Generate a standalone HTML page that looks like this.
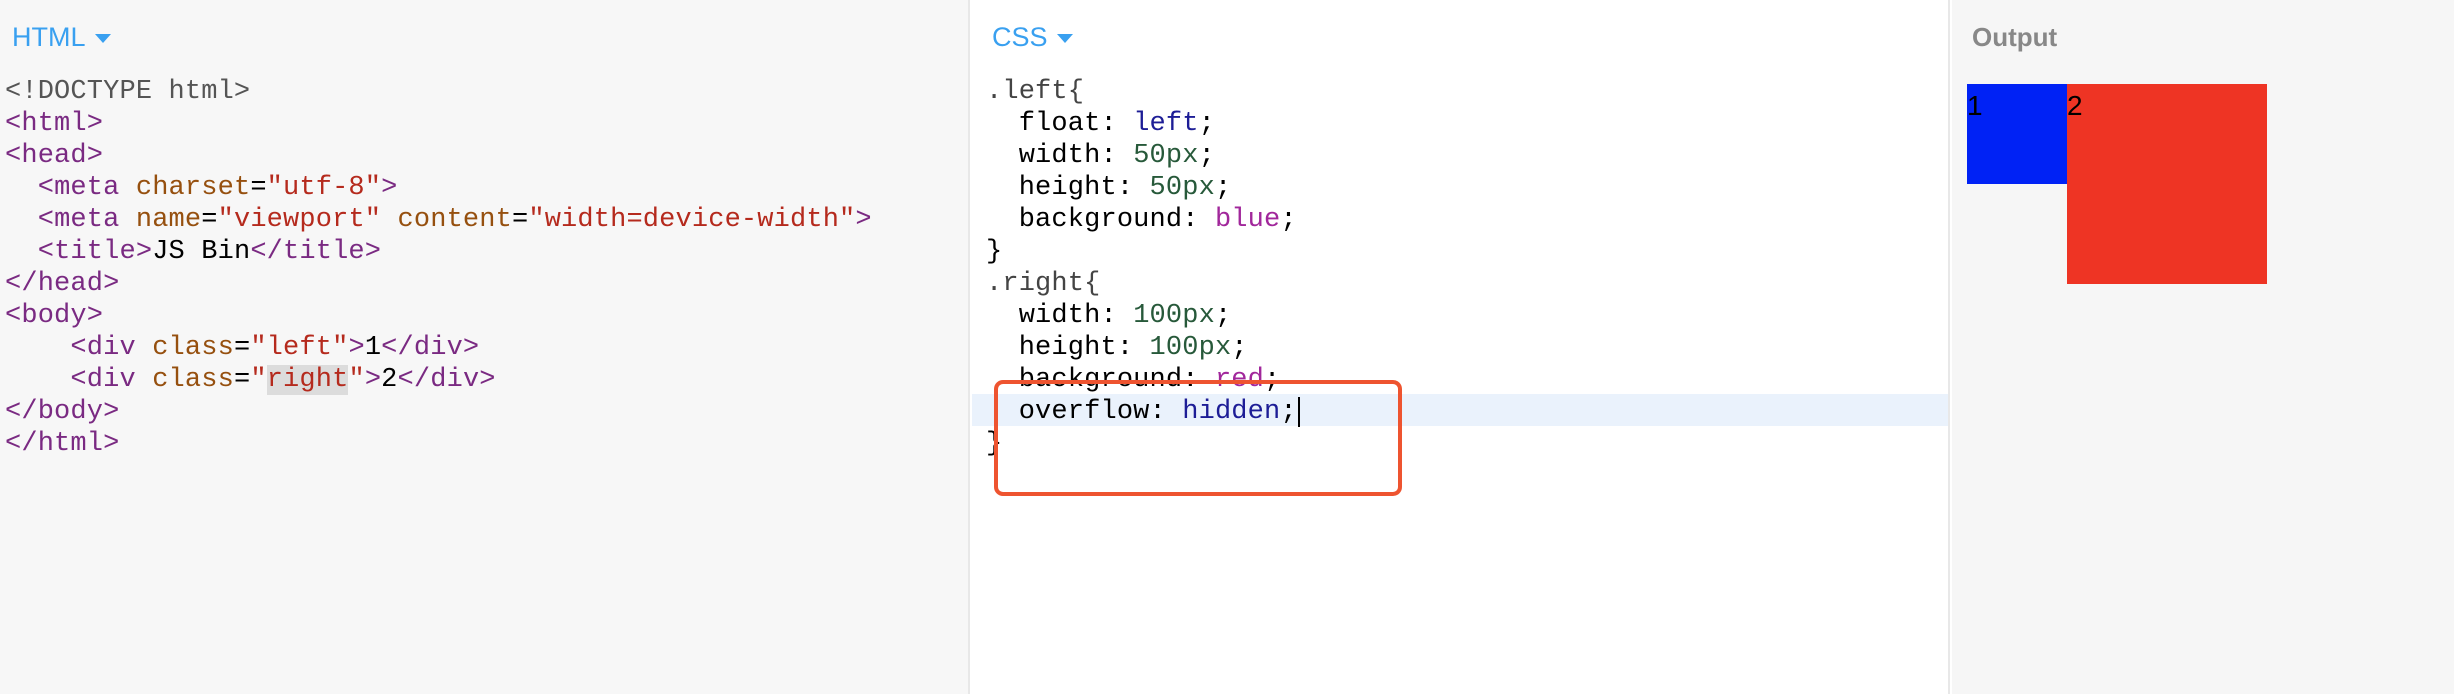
<!DOCTYPE html>
<html><head><meta charset="utf-8"><style>
*{margin:0;padding:0;box-sizing:border-box}
body{width:2454px;height:694px;overflow:hidden;position:relative;background:#fff;font-family:"Liberation Sans",sans-serif}
.p{position:absolute;top:0;height:694px}
#h{left:0;width:970px;background:#f7f7f7;border-right:2px solid #e8e8e8}
#c{left:972px;width:978px;background:#fff;border-right:2px solid #e8e8e8}
#o{left:1952px;width:502px;background:#f6f6f6}
.t{position:absolute;top:22px;font-size:27px;color:#39a0f0}
.t span{display:inline-block;width:0;height:0;border-left:8px solid transparent;border-right:8px solid transparent;border-top:9px solid #39a0f0;margin-left:9px;vertical-align:middle}
.code{position:absolute;top:76px;font-family:"Liberation Mono",monospace;font-size:27px;line-height:32px;white-space:pre;letter-spacing:0.15px;color:#000}
.tg{color:#7a2a82}.at{color:#96500f}.st{color:#b52a1d}.dt{color:#555}
.nm{color:#27593a}.kw{color:#1d1d96}.cl{color:#a1279b}.sel{color:#444}
</style></head><body>
<div class="p" id="h">
<div class="t" style="left:12px">HTML<span></span></div>
<div class="code" style="left:5px"><span class="dt">&lt;!DOCTYPE html&gt;</span>
<span class="tg">&lt;html&gt;</span>
<span class="tg">&lt;head&gt;</span>
  <span class="tg">&lt;meta</span> <span class="at">charset</span>=<span class="st">"utf-8"</span><span class="tg">&gt;</span>
  <span class="tg">&lt;meta</span> <span class="at">name</span>=<span class="st">"viewport"</span> <span class="at">content</span>=<span class="st">"width=device-width"</span><span class="tg">&gt;</span>
  <span class="tg">&lt;title&gt;</span>JS Bin<span class="tg">&lt;/title&gt;</span>
<span class="tg">&lt;/head&gt;</span>
<span class="tg">&lt;body&gt;</span>
    <span class="tg">&lt;div</span> <span class="at">class</span>=<span class="st">"left"</span><span class="tg">&gt;</span>1<span class="tg">&lt;/div&gt;</span>
    <span class="tg">&lt;div</span> <span class="at">class</span>=<span class="st">"<span style="background:#dcdcdc">right</span>"</span><span class="tg">&gt;</span>2<span class="tg">&lt;/div&gt;</span>
<span class="tg">&lt;/body&gt;</span>
<span class="tg">&lt;/html&gt;</span></div>
</div>
<div class="p" id="c">
<div class="t" style="left:20px">CSS<span></span></div>
<div style="position:absolute;left:0;top:394px;width:976px;height:32px;background:#eaf2fc"></div>
<div class="code" style="left:14px"><span class="sel">.left{</span>
  float: <span class="kw">left</span>;
  width: <span class="nm">50px</span>;
  height: <span class="nm">50px</span>;
  background: <span class="cl">blue</span>;
}
<span class="sel">.right{</span>
  width: <span class="nm">100px</span>;
  height: <span class="nm">100px</span>;
  background: <span class="cl">red</span>;
  overflow: <span class="kw">hidden</span>;<span style="border-left:2px solid #000;margin-left:1px"></span>
}</div>
<div style="position:absolute;left:22px;top:380px;width:408px;height:116px;border:4px solid #ee5430;border-radius:9px"></div>
</div>
<div class="p" id="o">
<div style="position:absolute;left:20px;top:22px;font-size:26px;font-weight:bold;color:#888">Output</div>
<div style="position:absolute;left:15px;top:84px;width:100px;height:100px;background:#0022f5;font-size:28px;line-height:44px">1</div>
<div style="position:absolute;left:115px;top:84px;width:200px;height:200px;background:#ee3424;font-size:28px;line-height:44px">2</div>
</div>
</body></html>
